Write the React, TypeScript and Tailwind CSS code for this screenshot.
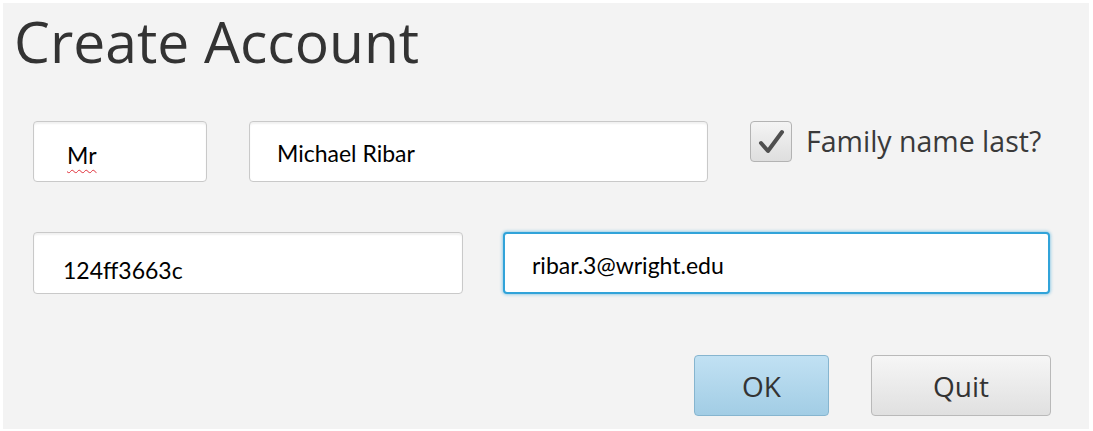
import { useState } from 'react';

const fieldFont = { fontFamily: 'Lato, "Open Sans", sans-serif' };
const uiFont = { fontFamily: '"Open Sans", "Noto Sans", sans-serif' };

function Field({
  value,
  width,
  pad,
  offset,
  focused,
  spell,
}: {
  value: string;
  width: string;
  pad: string;
  offset: string;
  focused?: boolean;
  spell?: boolean;
}) {
  return (
    <div
      className={`${width} h-full flex items-center rounded-[4px] bg-white ${pad} ${offset} ${
        focused
          ? 'border-2 border-[#31a3d9] shadow-[0_0_3px_1px_rgba(49,163,217,0.45)]'
          : 'border border-[#c9c9c9] shadow-[inset_0_2px_2px_rgba(0,0,0,0.06)]'
      }`}
    >
      <span
        className={`text-[23px] text-black leading-none ${
          spell ? 'underline decoration-wavy decoration-[#e0303a] decoration-1 underline-offset-[5px]' : ''
        }`}
        style={fieldFont}
      >
        {value}
      </span>
    </div>
  );
}

export default function App() {
  const [checked, setChecked] = useState(true);

  return (
    <div className="w-[1093px] h-[431px] bg-white pt-[3px] pl-[3px] pr-[4px] pb-[2px]">
      <div className="w-full h-full bg-[#f3f3f3] flex flex-col">
        <div className="h-[118px] pl-[11px] pt-[2px]">
          <h1 className="text-[57px] leading-[72px] text-[#333333]" style={uiFont}>
            Create Account
          </h1>
        </div>

        <div className="h-[61px] flex items-center pl-[30px]">
          <Field value="Mr" width="w-[174px]" pad="pl-[33px]" offset="pt-[7px]" spell />
          <div className="w-[42px]" />
          <Field value="Michael Ribar" width="w-[459px]" pad="pl-[27px]" offset="pt-[4px]" />
          <div className="w-[42px]" />
          <label className="self-start flex items-center gap-[14px] cursor-pointer">
            <button
              onClick={() => setChecked(!checked)}
              className="w-[42px] h-[41px] rounded-[4px] border border-[#b3b3b3] bg-gradient-to-b from-[#f4f4f4] to-[#dedede] flex items-center justify-center"
            >
              {checked && (
                <svg width="30" height="28" viewBox="0 0 30 28">
                  <path
                    d="M5 15 L12 23 L26 4"
                    fill="none"
                    stroke="#4f4f4f"
                    strokeWidth="4"
                    strokeLinecap="round"
                    strokeLinejoin="round"
                  />
                </svg>
              )}
            </button>
            <span className="text-[28.5px] leading-none text-[#3a3a3a] -mt-[1px]" style={uiFont}>
              Family name last?
            </span>
          </label>
        </div>

        <div className="h-[50px]" />

        <div className="h-[62px] flex items-center pl-[30px]">
          <Field value="124ff3663c" width="w-[430px]" pad="pl-[29px]" offset="pt-[15px]" />
          <div className="w-[40px]" />
          <Field value="ribar.3@wright.edu" width="w-[547px]" pad="pl-[27px]" offset="pt-[4px]" focused />
        </div>

        <div className="h-[61px]" />

        <div className="h-[61px] flex justify-end gap-[42px] pr-[38px]">
          <button
            className="w-[135px] h-full rounded-[4px] border border-[#86b5cf] bg-gradient-to-b from-[#c1e1f3] to-[#a2cde5] text-[28px] text-[#333333]"
            style={uiFont}
          >
            OK
          </button>
          <button
            className="w-[180px] h-full rounded-[4px] border border-[#b9b9b9] bg-gradient-to-b from-[#f6f6f6] to-[#e0e0e0] text-[28px] text-[#333333]"
            style={uiFont}
          >
            Quit
          </button>
        </div>
      </div>
    </div>
  );
}
